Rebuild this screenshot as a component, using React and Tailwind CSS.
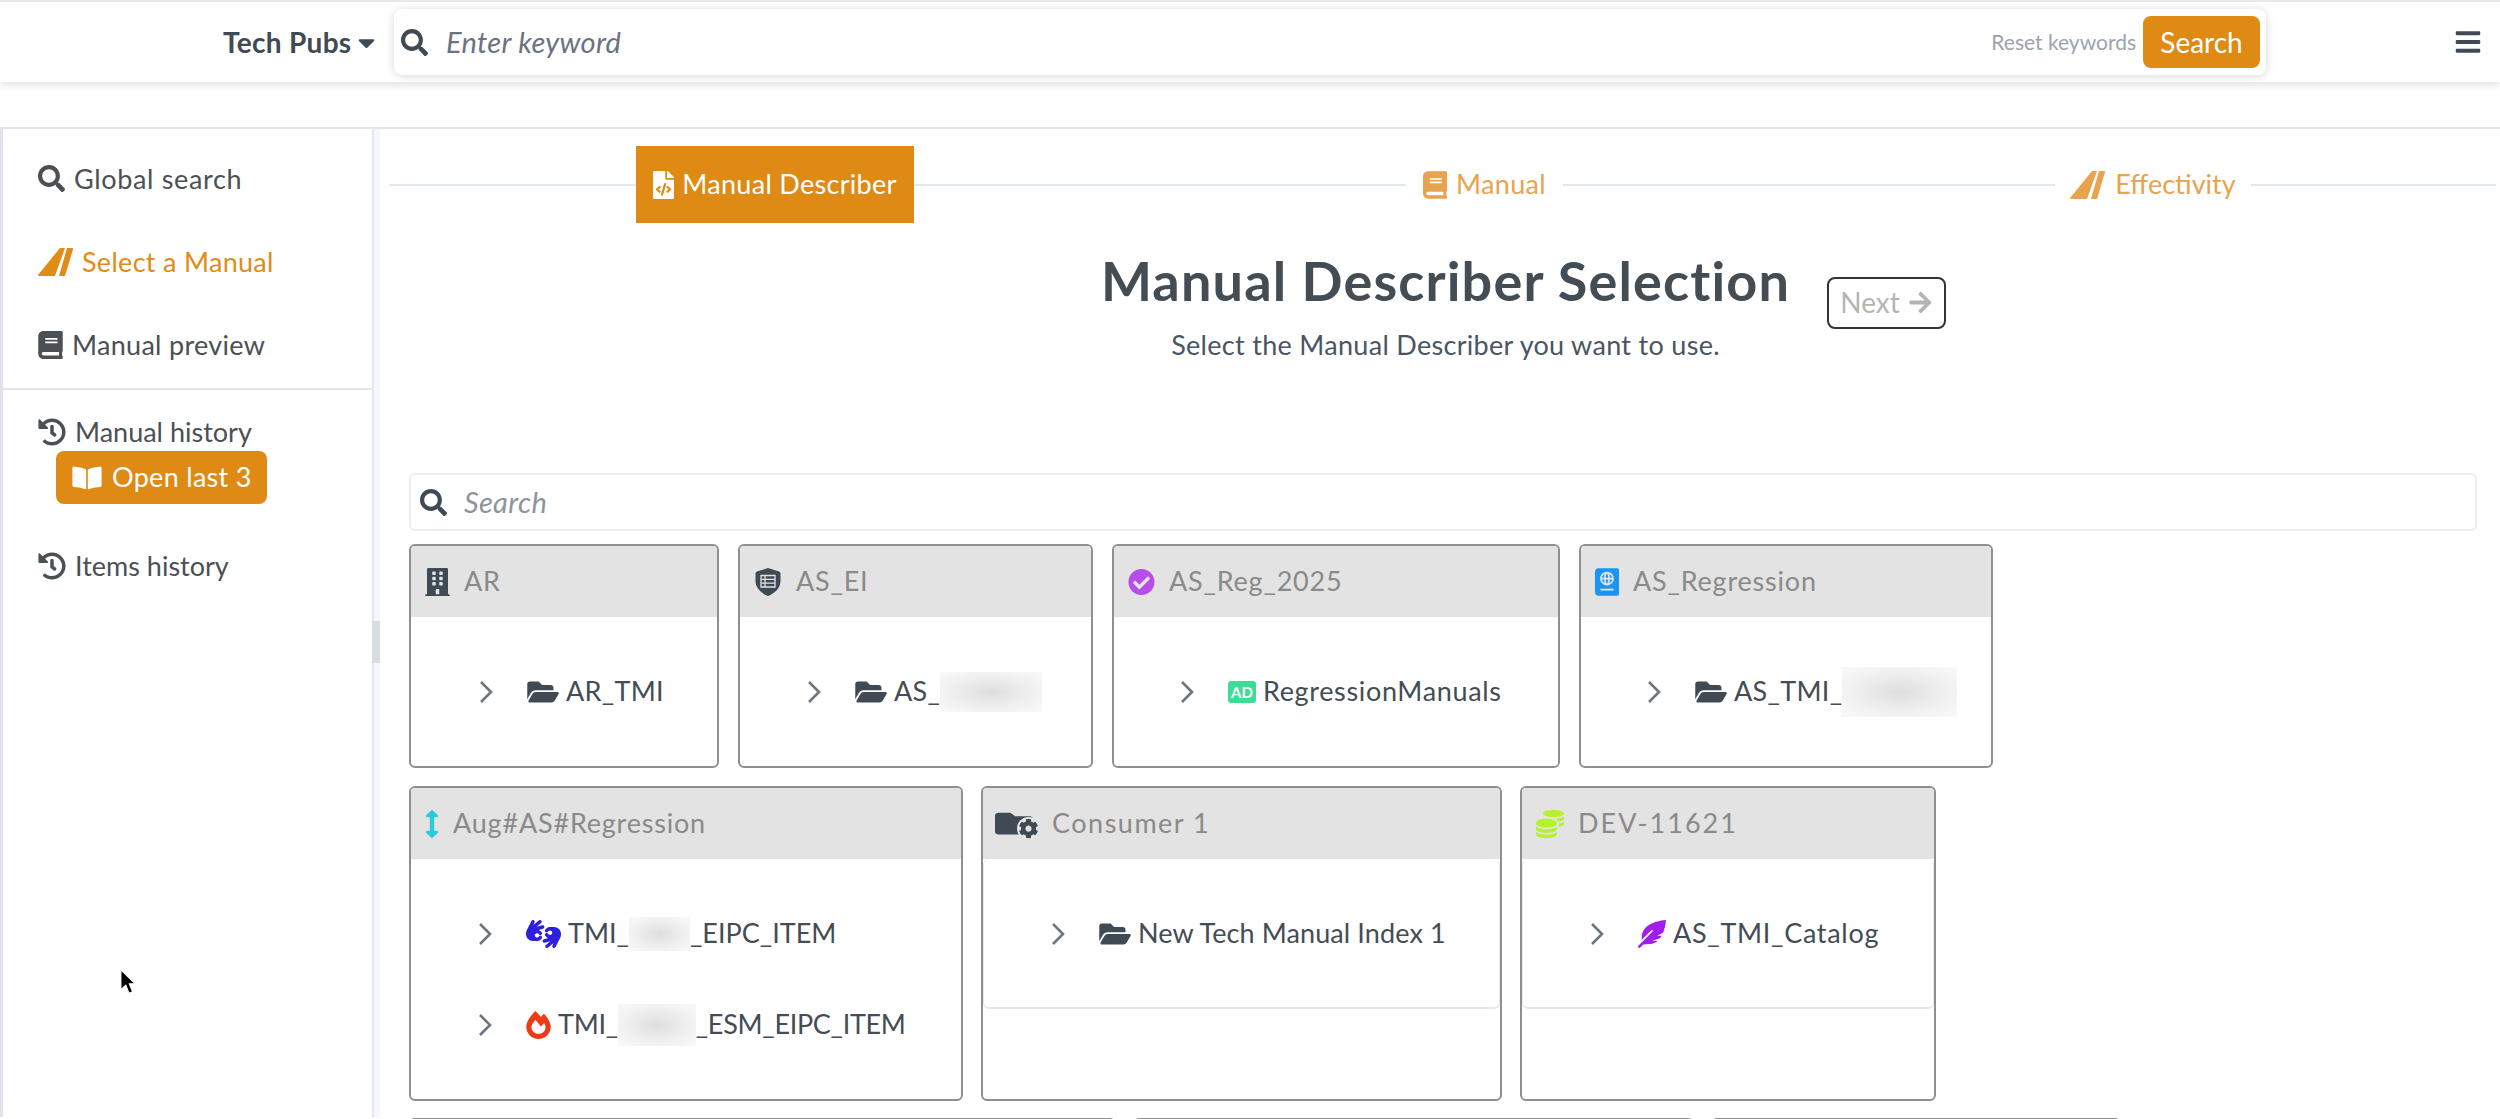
import { FaBars, FaBook, FaBookOpen, FaBuilding, FaCaretDown, FaCheckCircle, FaCoins, FaCog, FaFeatherAlt, FaFileCode, FaFireAlt, FaFolder, FaFolderOpen, FaHistory, FaPassport, FaSearch, FaArrowRight, FaArrowsAltV } from "react-icons/fa";
import { FaHandsAslInterpreting } from "react-icons/fa6";

const font = "font-['Lato','Open_Sans',sans-serif]";

function TailIcon({ className }) {
  return (
    <svg viewBox="0 0 35 28" className={className} fill="currentColor">
      <path d="M22 0h5l-10 28H1q-1.500 0-.8-1.200z" />
      <path d="M29 0h5.200q1 0 .8 1.200L27 28h-6z" />
    </svg>
  );
}

function ShieldIcon() {
  return (
    <svg viewBox="0 0 28 28" className="w-[28px] h-[28px] shrink-0">
      <path d="M14 0l11 3.500q1.500.5 1.500 2V13c0 7-6 12.500-12.500 15C7.500 25.500 1.500 20 1.500 13V5.500q0-1.500 1.500-2z" fill="#3f4a54" />
      <path d="M7 7.500h14v11.500H7z M7 11.300h14 M7 15.100h14 M11 7.500v11.500" fill="none" stroke="#e3e3e3" strokeWidth="1.300" />
    </svg>
  );
}

function Chevron() {
  return (
    <svg viewBox="0 0 14 24" className="w-[14px] h-6 shrink-0 text-[#6b7680]" fill="none" stroke="currentColor" strokeWidth="2.600">
      <path d="M2 2l10 10L2 22" />
    </svg>
  );
}

function Blur({ w, h }) {
  return (
    <span
      className="inline-block shrink-0 bg-[radial-gradient(ellipse_at_center,#dedede_0%,#f1f1f1_60%,#f9f9f9_100%)]"
      style={{ width: w, height: h }}
    />
  );
}

function FolderGear() {
  return (
    <span className="relative block w-[43px] h-[29px] shrink-0 -ml-[2px]">
      <FaFolder preserveAspectRatio="none" className="absolute left-0 top-0 text-[#3f4a54] w-[38px] h-[29px]" />
      <FaCog className="absolute -right-[2px] -bottom-[2px] text-[#3f4a54] w-[20px] h-[20px] rounded-full bg-[#e3e3e3] p-[1.500px] box-content" />
    </span>
  );
}

function AdIcon() {
  return (
    <span className="w-[28px] h-[22px] rounded-[3px] bg-[#3ddc97] text-white font-bold text-[15px] leading-[22px] tracking-normal text-center shrink-0">
      AD
    </span>
  );
}

function Item({ icon, track = "tracking-[0.3px]", children }) {
  return (
    <div className={`h-[91px] flex items-center text-[27px] ${track} text-[#444c54] whitespace-nowrap`}>
      <Chevron />
      <div className="ml-[34px] flex items-center gap-[7px]">
        {icon}
        <div className="flex items-center">{children}</div>
      </div>
    </div>
  );
}

function Card({ width, title, icon, pad, titleClass = "tracking-[0.8px]", short, children }) {
  return (
    <div className="border-2 border-[#8f8f8f] rounded-md overflow-hidden bg-white shrink-0" style={{ width }}>
      <div className="h-[71px] bg-[#e3e3e3] flex items-center pl-[14px] gap-[14px] text-[27px] text-[#8a8a8a]">
        {icon}
        <span className={titleClass}>{title}</span>
      </div>
      {short ? (
        <div className={`${pad} pt-[29px] pb-[28px] rounded-md border-b-2 border-x border-[#e5e8ec]`}>{children}</div>
      ) : (
        <div className={`${pad} py-[29px]`}>{children}</div>
      )}
    </div>
  );
}

const folder = <FaFolderOpen className="w-[32px] h-[28px] text-[#3f4a54] shrink-0" />;

function Step({ icon, label, width, className = "gap-[9px] tracking-[0.3px]" }) {
  return (
    <div className={`flex items-center justify-center text-[27px] text-[#e8a34f] shrink-0 ${className}`} style={{ width }}>
      {icon}
      <span>{label}</span>
    </div>
  );
}

function Side({ icon, className = "text-[#4b5055] tracking-[0.3px]", children }) {
  return (
    <div className={`flex items-center gap-[9px] text-[27px] leading-[31px] ${className}`}>
      {icon}
      <span>{children}</span>
    </div>
  );
}

export default function App() {
  return (
    <div className={`${font} relative h-screen overflow-hidden bg-white`}>
      {/* Header */}
      <header className="h-[82px] border-t-2 border-[#e7e8ea] bg-white shadow-[0_3px_8px_rgba(0,0,0,0.12)] flex items-center relative">
        <div className="ml-[223px] w-[171px] flex items-center font-bold text-[28px] tracking-[0.3px] text-[#3f4a54]">
          Tech Pubs
          <FaCaretDown className="ml-[7px] w-[17px] h-[27px]" />
        </div>
        <div className="w-[1872px] h-[66px] bg-white rounded-lg shadow-[0_1px_8px_rgba(0,0,0,0.16)] flex items-center pl-[7px] pr-[6px]">
          <FaSearch className="w-[27px] h-[27px] text-[#3f4a54]" />
          <span className="ml-[18px] italic text-[29px] tracking-[0.3px] text-[#6b7280]">Enter keyword</span>
          <span className="ml-auto text-[21px] text-[#9ca3af]">Reset keywords</span>
          <button className="ml-[7px] w-[117px] h-[52px] bg-[#de8a14] rounded-lg text-white text-[28px]">Search</button>
        </div>
        <FaBars className="ml-auto mr-[19px] w-[26px] h-[28px] text-[#3f4a54]" />
      </header>

      <div className="mt-[45px] border-t-2 border-[#e2e5ea] flex h-[990px]">
        {/* Sidebar */}
        <aside className="relative w-[380px] shrink-0 border-l-[3px] border-[#e0e3ea] border-r-[6px] border-r-[#f6f7fa]">
          <div className="h-full border-r-2 border-[#e2e8f0] pt-[34px]">
            <div className="pl-[35px] h-[227px] flex flex-col gap-[52px] border-b-2 border-[#e2e5ea]">
              <Side icon={<FaSearch className="w-[27px] h-[27px]" />} className="text-[#4b5055] tracking-[0.65px]">Global search</Side>
              <Side icon={<TailIcon className="w-[35px] h-[28px]" />} className="text-[#e08c16] tracking-[0.3px]">Select a Manual</Side>
              <Side icon={<FaBook className="w-[25px] h-[28px]" />}>Manual preview</Side>
            </div>
            <div className="pl-[35px] pt-[26px]">
              <Side icon={<FaHistory className="w-[28px] h-[28px]" />} className="text-[#4b5055]">Manual history</Side>
              <button className="ml-[18px] mt-[4px] w-[211px] h-[53px] bg-[#de8a14] rounded-lg text-white text-[27px] tracking-[0.3px] flex items-center gap-[9px] pl-[15px]">
                <FaBookOpen className="w-[32px] h-[26px]" />
                Open last 3
              </button>
              <div className="mt-[46px]">
                <Side icon={<FaHistory className="w-[28px] h-[28px]" />} className="text-[#4b5055]">Items history</Side>
              </div>
            </div>
          </div>
          {/* Resize handle */}
          <div className="absolute -right-[6px] top-[492px] w-2 h-[42px] bg-[#d9dde3]" />
        </aside>

        {/* Main */}
        <main className="flex-1 min-w-0 pl-[9px] pr-[4px]">
          {/* Stepper */}
          <div className="h-[77px] mt-[17px] flex items-center">
            <div className="w-[247px] h-[2px] bg-[#e2e8f0]" />
            <div className="w-[278px] h-[77px] bg-[#de8a14] text-white text-[27px] tracking-[0.3px] flex items-center justify-center gap-[8px]">
              <FaFileCode className="w-[21px] h-[28px]" />
              Manual Describer
            </div>
            <div className="w-[492px] h-[2px] bg-[#e2e8f0]" />
            <Step width={157} icon={<FaBook className="w-[24px] h-[28px]" />} label="Manual" />
            <div className="w-[492px] h-[2px] bg-[#e2e8f0]" />
            <Step width={196} className="gap-[10px] tracking-normal" icon={<TailIcon className="w-[35px] h-[28px]" />} label="Effectivity" />
            <div className="w-[245px] h-[2px] bg-[#e2e8f0]" />
          </div>

          {/* Title */}
          <div className="relative flex flex-col items-center mt-[27px] ml-[6px] h-[124px]">
            <h1 className="text-[54px] leading-[62px] tracking-[1.150px] font-bold text-[#444c54]">Manual Describer Selection</h1>
            <p className="mt-[17px] text-[27px] leading-[32px] tracking-[0.3px] text-[#4b5563]">Select the Manual Describer you want to use.</p>
            <button className="absolute left-[1432px] top-[27px] w-[119px] h-[52px] border-2 border-[#333] rounded-lg flex items-center justify-center gap-[8px] text-[28px] leading-[46px] pb-[2px] text-[#b5b5b0]">
              Next
              <FaArrowRight className="w-[25px] h-[25px]" />
            </button>
          </div>

          {/* Filter + cards */}
          <div className="mt-[99px] ml-[20px] mr-[19px] h-[58px] border-2 border-[#eeeeee] rounded-md flex items-center pl-[9px]">
            <FaSearch className="w-[27px] h-[27px] text-[#3f4a54]" />
            <span className="ml-[17px] italic text-[29px] tracking-[0.3px] text-[#8e949a]">Search</span>
          </div>

          <div className="ml-[20px] mt-[13px] flex flex-col gap-[18px]">
            <div className="flex gap-[19px] items-stretch">
              <Card width={310} title="AR" pad="pl-[68px]" icon={<FaBuilding className="w-[25px] h-[28px] text-[#3f4a54]" />}>
                <Item icon={folder}>AR_TMI</Item>
              </Card>
              <Card width={355} title="AS_EI" pad="pl-[67px]" icon={<ShieldIcon />}>
                <Item icon={folder}>AS_<Blur w={102} h={40} /></Item>
              </Card>
              <Card width={448} title="AS_Reg_2025" pad="pl-[66px]" icon={<FaCheckCircle className="w-[27px] h-[28px] text-[#b74ee8]" />}>
                <Item track="tracking-[0.65px]" icon={<AdIcon />}>RegressionManuals</Item>
              </Card>
              <Card width={414} title="AS_Regression" pad="pl-[66px]" icon={<FaPassport className="w-[24px] h-[28px] text-[#1a96f0]" />}>
                <Item icon={folder}>AS_TMI_<Blur w={115} h={50} /></Item>
              </Card>
            </div>
            <div className="flex gap-[18px] items-stretch">
              <Card width={554} title="Aug#AS#Regression" pad="pl-[67px]" icon={<FaArrowsAltV className="w-[14px] h-[28px] text-[#2ccbdc]" />}>
                <Item track="tracking-normal" icon={<FaHandsAslInterpreting className="w-[35px] h-[28px] text-[#2c1fe0] shrink-0" />}>
                  TMI_<Blur w={61} h={34} />_EIPC_ITEM
                </Item>
                <Item track="tracking-[-0.3px]" icon={<FaFireAlt className="w-[25px] h-[28px] text-[#f03a17] shrink-0" />}>
                  TMI_<Blur w={78} h={42} />_ESM_EIPC_ITEM
                </Item>
              </Card>
              <Card width={521} title="Consumer 1" titleClass="tracking-[1.5px]" pad="pl-[67px]" short icon={<FolderGear />}>
                <Item track="tracking-[0.1px]" icon={folder}>New Tech Manual Index 1</Item>
              </Card>
              <Card width={416} title="DEV-11621" titleClass="tracking-[2px]" pad="pl-[67px]" short icon={<FaCoins className="w-[28px] h-[28px] text-[#b5f22e]" />}>
                <Item track="tracking-[0.7px]" icon={<FaFeatherAlt className="w-[28px] h-[28px] text-[#a21cf0] shrink-0" />}>AS_TMI_Catalog</Item>
              </Card>
            </div>
            {/* Third row, cut off by the window */}
            <div className="flex gap-[17px] -mt-px">
              <div className="w-[707px] h-10 border-2 border-[#8f8f8f] rounded-md" />
              <div className="w-[561px] h-10 border-2 border-[#8f8f8f] rounded-md" />
              <div className="w-[410px] h-10 border-2 border-[#8f8f8f] rounded-md" />
            </div>
          </div>
        </main>
      </div>

      {/* Mouse pointer */}
      <svg viewBox="0 0 20 30" className="absolute left-[120px] top-[969px] w-[18px] h-[27px]">
        <path d="M1 1v22l5.500-5 3.500 9 4-1.700-3.600-8.800H17z" fill="#000" stroke="#fff" strokeWidth="1.200" />
      </svg>
    </div>
  );
}
